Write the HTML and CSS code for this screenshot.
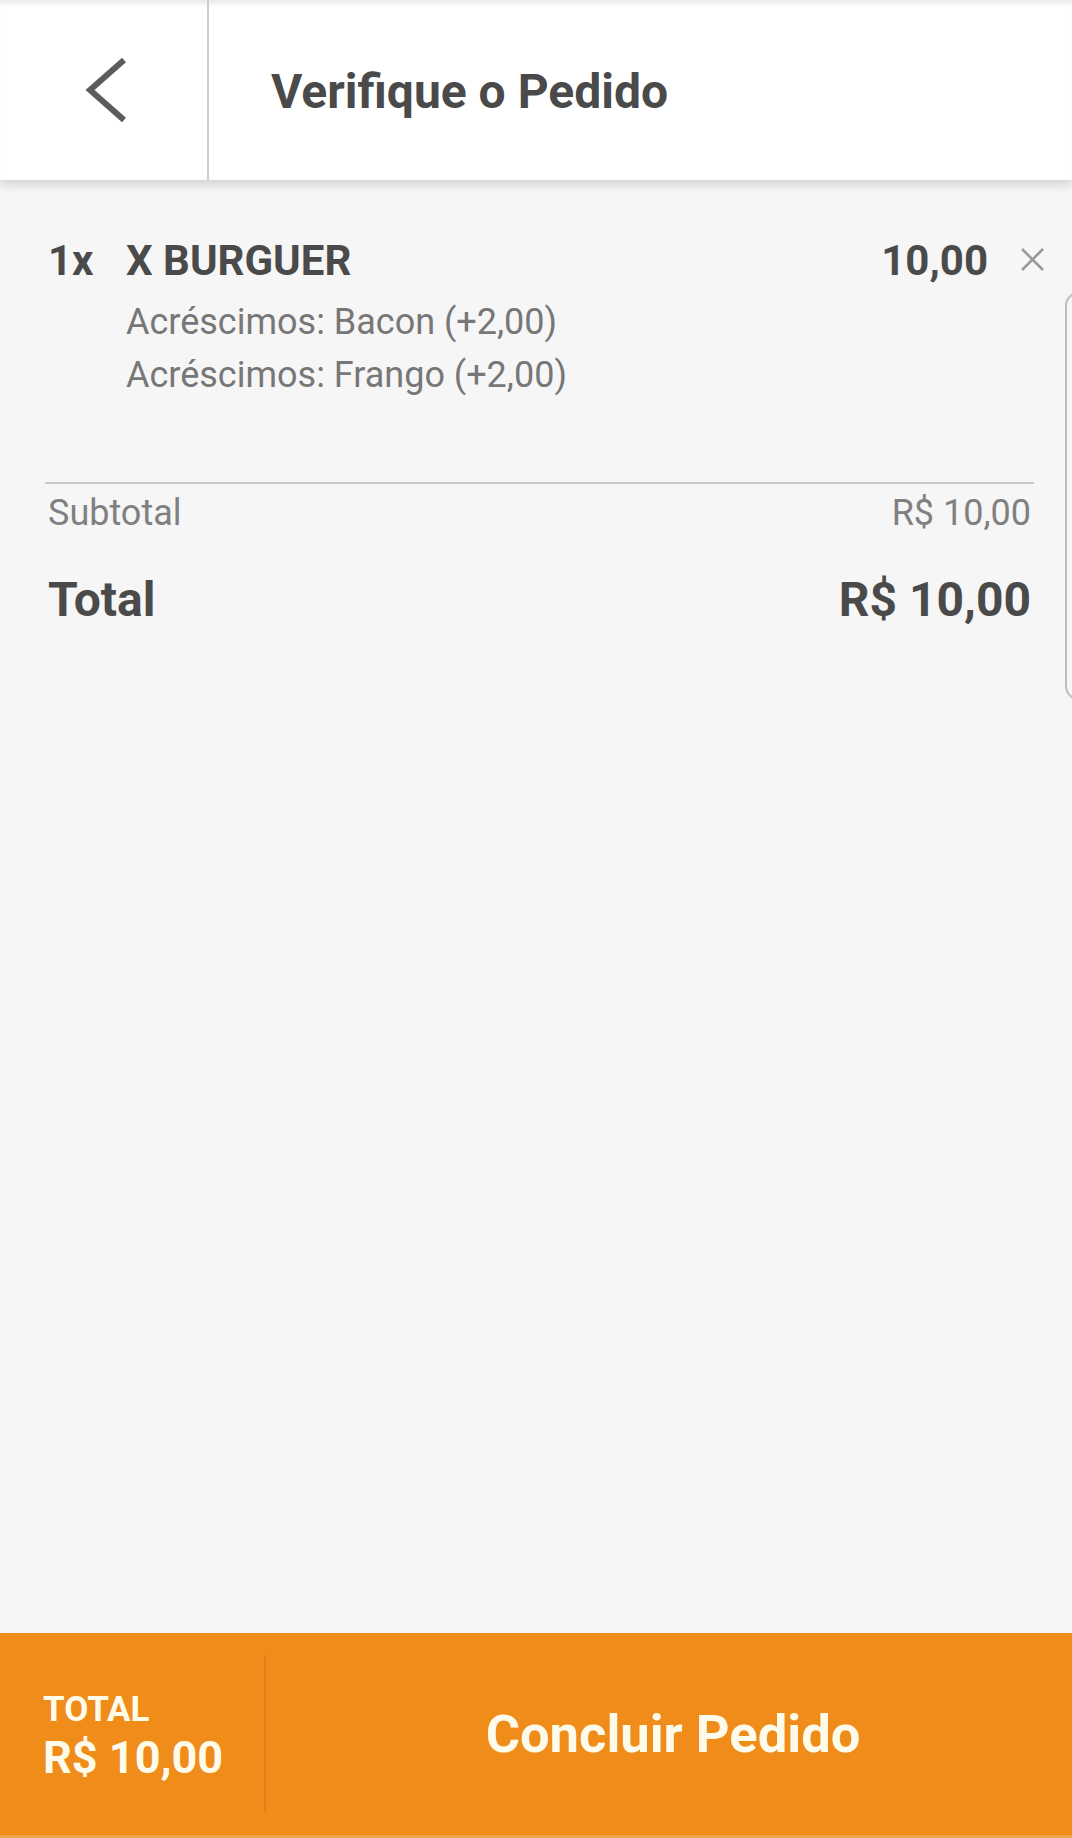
FILE: index.html
```html
<!DOCTYPE html>
<html lang="pt-BR">
<head>
<meta charset="utf-8">
<title>Verifique o Pedido</title>
<link rel="stylesheet" href="styles.css">
</head>
<body>
<div class="page">
  <header class="topbar">
    <div class="back">
      <svg class="chev" width="44" height="66" viewBox="0 0 44 66">
        <path d="M39 2 L5 32 L39 62" fill="none" stroke="#5c5c5c" stroke-width="6" stroke-linejoin="miter"/>
      </svg>
    </div>
    <h1 class="title">Verifique o Pedido</h1>
  </header>

  <main class="content">
    <div class="item">
      <div class="item-row">
        <span class="qty">1x</span>
        <span class="name">X BURGUER</span>
        <span class="price">10,00</span>
        <span class="remove">
          <svg width="25" height="25" viewBox="0 0 25 25">
            <path d="M2 2 L23 23 M23 2 L2 23" stroke="#9a9a9a" stroke-width="2.6" fill="none"/>
          </svg>
        </span>
      </div>
      <div class="addons">
        <div class="addon">Acréscimos: Bacon (+2,00)</div>
        <div class="addon">Acréscimos: Frango (+2,00)</div>
      </div>
    </div>

    <div class="divider"></div>

    <div class="sum-row subtotal">
      <span>Subtotal</span>
      <span>R$ 10,00</span>
    </div>
    <div class="sum-row total">
      <span>Total</span>
      <span>R$ 10,00</span>
    </div>

    <div class="edge-panel"></div>
  </main>

  <footer class="bottombar">
    <div class="foot-total">
      <div class="foot-label">TOTAL</div>
      <div class="foot-value">R$ 10,00</div>
    </div>
    <div class="foot-action">Concluir Pedido</div>
  </footer>
</div>
</body>
</html>
```

FILE: styles.css
```css
* { box-sizing: border-box; }

html, body {
  margin: 0;
  padding: 0;
}

body {
  font-family: Roboto, "Noto Sans", "Liberation Sans", sans-serif;
  background: #f6f6f6;
  color: #4a4a4a;
}

.page {
  height: 1838px;
  display: flex;
  flex-direction: column;
  position: relative;
  overflow: hidden;
}

.topbar {
  height: 180px;
  flex: 0 0 auto;
  display: flex;
  align-items: stretch;
  background: #ffffff;
  box-shadow: 0 4px 10px rgba(0, 0, 0, 0.16), inset 0 7px 6px -5px rgba(0, 0, 0, 0.12);
  position: relative;
  z-index: 2;
}

.back {
  width: 209px;
  border-right: 2px solid #cfcfcf;
  display: flex;
  align-items: center;
  justify-content: center;
}

.chev {
  display: block;
  margin-left: 6px;
  margin-top: 2px;
}

.title {
  margin: 0;
  padding-left: 62px;
  align-self: center;
  font-size: 48px;
  font-weight: 700;
  color: #4a4a4a;
  margin-top: 2px;
}

.content {
  flex: 1 1 auto;
  padding: 56px 41px 0 48px;
  position: relative;
}

.item-row {
  display: flex;
  align-items: center;
  height: 50px;
  font-size: 42px;
  line-height: 50px;
  font-weight: 700;
  color: #4a4a4a;
}

.qty {
  width: 78px;
}

.name {
  flex: 1 1 auto;
}

.price {
  margin-right: 32px;
}

.remove {
  display: flex;
  width: 25px;
  height: 25px;
  margin-right: -14px;
  margin-top: -4px;
}

.addons {
  padding-left: 78px;
  margin-top: 10px;
}

.addon {
  font-size: 36px;
  line-height: 53px;
  color: #777777;
}

.divider {
  height: 2px;
  background: #c9c9c9;
  margin: 80px -3px 0 -3px;
}

.sum-row {
  display: flex;
  justify-content: space-between;
}

.subtotal {
  margin-top: 7px;
  font-size: 36px;
  line-height: 44px;
  color: #808080;
}

.total {
  margin-top: 37px;
  font-size: 48px;
  line-height: 56px;
  font-weight: 700;
  color: #4a4a4a;
}

.edge-panel {
  position: absolute;
  left: 1065px;
  top: 112px;
  width: 40px;
  height: 408px;
  border: 2px solid #bdbdbd;
  border-radius: 14px;
}

.bottombar {
  flex: 0 0 205px;
  height: 205px;
  background: #f08c1a;
  display: flex;
  align-items: stretch;
  color: #fffbea;
  border-bottom: 3px solid #f3a54a;
}

.foot-total {
  width: 266px;
  padding-left: 43px;
  padding-top: 4px;
  margin: 22px 0;
  border-right: 2px solid #e0811a;
  display: flex;
  flex-direction: column;
  justify-content: center;
  font-weight: 700;
}

.foot-label {
  font-size: 35px;
  line-height: 42px;
}

.foot-value {
  font-size: 45px;
  line-height: 53px;
}

.foot-action {
  flex: 1 1 auto;
  display: flex;
  align-items: center;
  justify-content: center;
  font-size: 52.5px;
  font-weight: 700;
  padding-left: 8px;
}
```
